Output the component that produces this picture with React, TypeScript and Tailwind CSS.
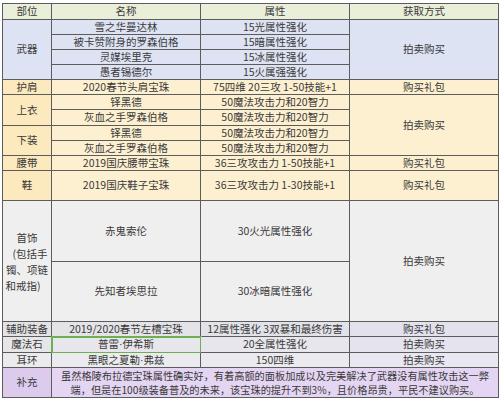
import React from "react";

const line = "border-r border-b border-[#5c5c5c]";
const cell = `${line} flex items-center justify-center text-center leading-none whitespace-nowrap`;

type Row = {
  label?: { text: React.ReactNode; span?: number; bg: string };
  name: React.ReactNode;
  nameBg: string;
  nameExtra?: string;
  attr: string;
  attrBg: string;
  get?: { text: string; span?: number; bg: string };
};

const rowSpan: Record<number, string> = {
  1: "",
  2: "row-span-2",
  4: "row-span-4",
};

const blue = "bg-[#dde3f3]";
const yellow = "bg-[#fdf0d0]";
const yellowDeep = "bg-[#fce9bd]";
const grey = "bg-[#efefef]";

const dot = <span style={{ fontFamily: '"Liberation Sans", sans-serif' }}>·</span>;

const rows: Row[] = [
  { label: { text: "武器", span: 4, bg: blue }, name: "雪之华曼达林", nameBg: blue, attr: "15光属性强化", attrBg: blue, get: { text: "拍卖购买", span: 4, bg: blue } },
  { name: "被卡赞附身的罗森伯格", nameBg: blue, attr: "15暗属性强化", attrBg: blue },
  { name: "灵媒埃里克", nameBg: blue, attr: "15冰属性强化", attrBg: blue },
  { name: "愚者锡德尔", nameBg: blue, attr: "15火属强强化", attrBg: blue },
  { label: { text: "护肩", bg: yellowDeep }, name: "2020春节头肩宝珠", nameBg: yellow, attr: "75四维 20三攻 1-50技能+1", attrBg: yellow, get: { text: "购买礼包", bg: yellow } },
  { label: { text: "上衣", span: 2, bg: yellowDeep }, name: "铎黑德", nameBg: yellow, attr: "50魔法攻击力和20智力", attrBg: yellow, get: { text: "拍卖购买", span: 4, bg: yellow } },
  { name: "灰血之手罗森伯格", nameBg: yellow, attr: "50魔法攻击力和20智力", attrBg: yellow },
  { label: { text: "下装", span: 2, bg: yellowDeep }, name: "铎黑德", nameBg: yellow, attr: "50魔法攻击力和20智力", attrBg: yellow },
  { name: "灰血之手罗森伯格", nameBg: yellow, attr: "50魔法攻击力和20智力", attrBg: yellow },
  { label: { text: "腰带", bg: yellowDeep }, name: "2019国庆腰带宝珠", nameBg: yellow, attr: "36三攻攻击力 1-50技能+1", attrBg: yellow, get: { text: "购买礼包", bg: yellow } },
  { label: { text: "鞋", bg: yellowDeep }, name: "2019国庆鞋子宝珠", nameBg: yellow, attr: "36三攻攻击力 1-30技能+1", attrBg: yellow, get: { text: "购买礼包", bg: yellow } },
  {
    label: {
      text: (
        <span className="flex flex-col items-center gap-[5px] leading-[11px]">
          <span>首饰</span>
          <span className="pl-[6px]">(包括手</span>
          <span>镯、项链</span>
          <span className="pr-[8px]">和戒指)</span>
        </span>
      ),
      span: 2,
      bg: grey,
    },
    name: "赤鬼索伦",
    nameBg: grey,
    attr: "30火光属性强化",
    attrBg: grey,
    get: { text: "拍卖购买", span: 2, bg: grey },
  },
  { name: "先知者埃思拉", nameBg: grey, attr: "30冰暗属性强化", attrBg: grey },
  { label: { text: "辅助装备", bg: "bg-[#e3e3e6]" }, name: "2019/2020春节左槽宝珠", nameBg: "bg-[#e4e4e8]", attr: "12属性强化 3双暴和最终伤害", attrBg: "bg-[#e2e2e9]", get: { text: "购买礼包", bg: "bg-[#e2e1ec]" } },
  { label: { text: "魔法石", bg: "bg-[#e6e6e9]" }, name: <>普雷{dot}伊希斯</>, nameBg: "bg-[#e7e7eb]", nameExtra: "outline outline-2 outline-[#6fae52] -outline-offset-1", attr: "20全属性强化", attrBg: "bg-[#e6e6ec]", get: { text: "拍卖购买", bg: "bg-[#e5e4ee]" } },
  { label: { text: "耳环", bg: "bg-[#ebebee]" }, name: <>黑眼之夏勒{dot}弗兹</>, nameBg: "bg-[#ebebef]", attr: "150四维", attrBg: "bg-[#eaeaf0]", get: { text: "拍卖购买", bg: "bg-[#e9e7f1]" } },
];

export default function App() {
  return (
    <div
      className="w-[500px] h-[400px] bg-white overflow-hidden pt-[3px] pl-[2px] text-[10.5px] text-[#3a3a3a]"
      style={{ fontFamily: '"Noto Sans CJK SC", "Noto Sans", sans-serif' }}
    >
      <div className="grid grid-cols-[49px_149px_149px_149px] grid-rows-[16px_15px_15px_15px_15px_15px_15px_16px_15px_15px_15px_30px_61px_60px_15px_16px_15px_30px] border-t border-l border-[#5c5c5c] w-[497px]">
        <div className={`${cell} bg-[#e9efd9]`}>部位</div>
        <div className={`${cell} bg-[#e9efd9]`}>名称</div>
        <div className={`${cell} bg-[#e9efd9]`}>属性</div>
        <div className={`${cell} bg-[#e9efd9]`}>获取方式</div>

        {rows.map((r, i) => (
          <React.Fragment key={i}>
            {r.label && (
              <div className={`${cell} ${rowSpan[r.label.span ?? 1]} ${r.label.bg}`}>{r.label.text}</div>
            )}
            <div className={`${cell} ${r.nameBg} ${r.nameExtra ?? ""}`}>{r.name}</div>
            <div className={`${cell} ${r.attrBg}`}>{r.attr}</div>
            {r.get && (
              <div className={`${cell} ${rowSpan[r.get.span ?? 1]} ${r.get.bg}`}>{r.get.text}</div>
            )}
          </React.Fragment>
        ))}

        <div className={`${cell} bg-[#dccbec]`}>补充</div>
        <div className={`${line} col-span-3 bg-[#e4d5f2] flex flex-col items-center justify-center text-[10.2px] leading-[14px] whitespace-nowrap`}>
          <span>虽然格陵布拉德宝珠属性确实好，有着高额的面板加成以及完美解决了武器没有属性攻击这一弊</span>
          <span>端，但是在100级装备普及的未来，该宝珠的提升不到3%，且价格昂贵，平民不建议购买。</span>
        </div>
      </div>
    </div>
  );
}
